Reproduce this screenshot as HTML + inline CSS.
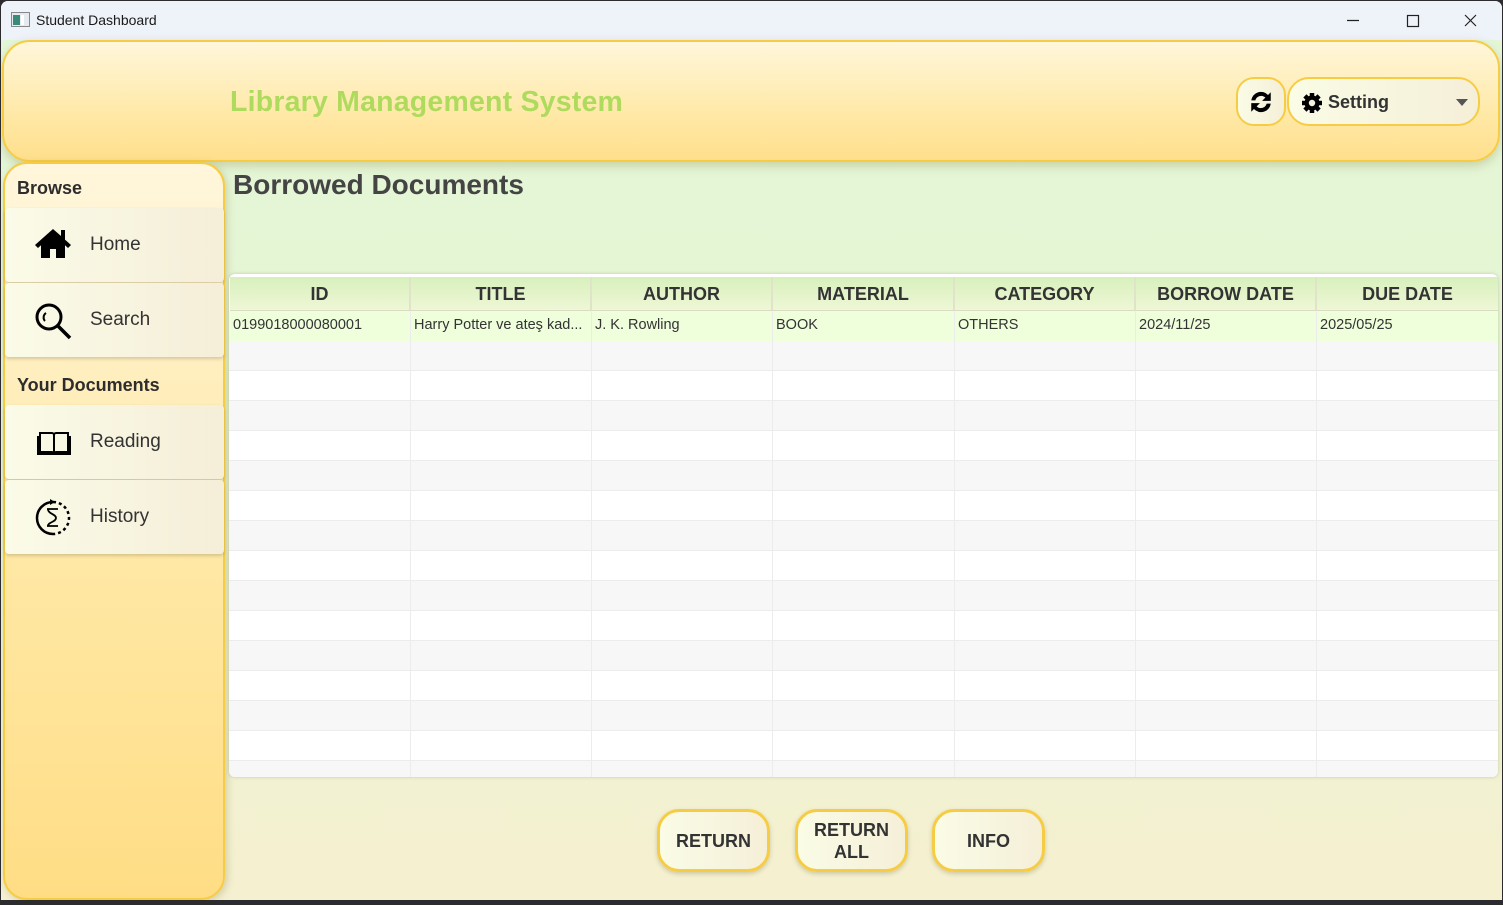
<!DOCTYPE html>
<html><head><meta charset="utf-8">
<style>
*{margin:0;padding:0;box-sizing:border-box}
body{width:1503px;height:905px;overflow:hidden;background:#2b2b30;font-family:"Liberation Sans",sans-serif;position:relative}
.win{position:absolute;left:1px;top:1px;width:1501px;height:899px;background:linear-gradient(#e3f7d8,#e6f5d4 40%,#f5f0d0);border-radius:7px 7px 0 0;overflow:hidden}
.tb{position:absolute;left:0;top:0;width:1501px;height:39px;background:#eef2f9;font-size:14px;color:#1a1a1a}
.tb .t{position:absolute;left:35px;top:11px}
.hdr{position:absolute;left:1px;top:39px;width:1498px;height:122px;border:2px solid #f7cc45;border-radius:28px;background:linear-gradient(#fff7db,#ffe9a8 60%,#ffdf8c);box-shadow:0 4px 10px rgba(150,140,80,.35)}
.title{position:absolute;left:226px;top:44px;font-size:28.5px;font-weight:bold;color:#aedb5d;letter-spacing:.2px}
.side{position:absolute;left:2px;top:161px;width:222px;height:738px;border:2px solid #f7cc45;border-radius:24px;background:linear-gradient(#fff6dc,#ffe9a8 50%,#ffdd85);box-shadow:2px 2px 8px rgba(150,140,80,.35)}
.sh{position:absolute;left:12px;font-size:18px;font-weight:bold;color:#2d2d2d}
.item{position:absolute;left:0;width:219px;height:74px;background:linear-gradient(90deg,#fafbe8,#f5eed8);border-radius:4px;box-shadow:0 2px 3px rgba(120,110,70,.3);font-size:19px;color:#333}
.item span{position:absolute;left:85px;top:26px}
.item svg{position:absolute;left:29px;top:19px}
h2{position:absolute;left:232px;top:168px;font-size:28px;color:#444;font-weight:bold}
.tbl{position:absolute;left:228px;top:273px;width:1269px;height:503px;background:#fff;border-radius:6px;box-shadow:0 0 3px rgba(150,160,120,.5);overflow:hidden}
.hd{position:absolute;top:3px;height:34px;background:linear-gradient(#d8f0bc,#eef7d6);border-right:2px solid #dfe3c8;border-bottom:1px solid #d8dcc0;font-size:18px;font-weight:bold;color:#333;text-align:center;line-height:34px}
.row{position:absolute;left:0;width:1269px;height:30px;border-bottom:1px solid #ececec}
.cell{position:absolute;font-size:14.5px;color:#333;top:43px}
.vl{position:absolute;top:37px;height:466px;width:1px;background:#ececec}
.btn{position:absolute;top:808px;width:113px;height:63px;border:3px solid #f7cc45;border-radius:22px;background:linear-gradient(90deg,#fafce6,#f5efd8);box-shadow:0 2px 4px rgba(120,110,70,.3);font-size:18px;font-weight:bold;color:#333;text-align:center;display:flex;align-items:center;justify-content:center;line-height:22px}
</style></head><body>
<div class="win">
<div class="tb">
<svg style="position:absolute;left:10px;top:11px" width="19" height="15"><rect x=".5" y=".5" width="18" height="14" fill="#e5e9f0" stroke="#888"/><rect x="2" y="3" width="7" height="10" fill="#3a8a7a"/><rect x="10" y="3" width="3" height="10" fill="#fff"/></svg>
<div class="t">Student Dashboard</div>
<svg style="position:absolute;left:1346px;top:12px" width="140" height="16"><path d="M0 7.5h12" stroke="#222" stroke-width="1.2"/><rect x="60.5" y="2.5" width="11" height="11" fill="none" stroke="#222" stroke-width="1.2"/><path d="M118 2l11 11M129 2l-11 11" stroke="#222" stroke-width="1.2"/></svg>
</div>
<div class="hdr">
<div class="title">Library Management System</div>
<div style="position:absolute;left:1232px;top:35px;width:50px;height:49px;border:2px solid #f7cc45;border-radius:18px;background:linear-gradient(90deg,#fafce6,#f5efd8)">
<svg style="position:absolute;left:10px;top:10px" width="26" height="26" viewBox="0 0 24 24"><path d="M3 10.5a9 9 0 0 1 15.5-5L21 3v8h-8l3-3A5.5 5.5 0 0 0 6.8 10.5z M21 13.5a9 9 0 0 1-15.5 5L3 21v-8h8l-3 3a5.5 5.5 0 0 0 9.2-2.5z" fill="#000"/></svg>
</div>
<div style="position:absolute;left:1283px;top:35px;width:193px;height:49px;border:2px solid #f7cc45;border-radius:22px;background:linear-gradient(90deg,#fafce6,#f5efd8)">
<svg style="position:absolute;left:12px;top:13px" width="22" height="22" viewBox="0 0 22 22"><g fill="#000"><circle cx="11" cy="11" r="7.5"/><g stroke="#000" stroke-width="4.5"><path d="M11 1v20M1 11h20M3.9 3.9l14.2 14.2M18.1 3.9L3.9 18.1"/></g></g><circle cx="11" cy="11" r="3.2" fill="#f7f4dc"/></svg>
<span style="position:absolute;left:39px;top:13px;font-size:18px;font-weight:bold;color:#333">Setting</span>
<svg style="position:absolute;left:167px;top:20px" width="12" height="7"><path d="M0 0h12L6 7z" fill="#555"/></svg>
</div>
</div>
<div class="side">
<div class="sh" style="top:14px">Browse</div>
<div class="item" style="top:44px"><svg width="38" height="32" viewBox="0 0 38 32"><path d="M19 2L1 18l3 3 3-2.7V31h9v-9h6v9h9V18.3L34 21l3-3-6-5.4V3h-4v6L19 2z" fill="#000"/></svg><span>Home</span></div>
<div class="item" style="top:119px"><svg width="40" height="40" viewBox="0 0 40 40"><circle cx="15" cy="15" r="12" fill="none" stroke="#000" stroke-width="3"/><path d="M24 24l12 12" stroke="#000" stroke-width="3.5"/><path d="M11 19c-2-2-2-6 1-8" fill="none" stroke="#000" stroke-width="2"/></svg><span>Search</span></div>
<div class="sh" style="top:211px">Your Documents</div>
<div class="item" style="top:241px"><svg width="34" height="28" viewBox="0 0 34 28" style="top:24px;left:32px"><path d="M3 4h12c1 0 2 1 2 2 0-1 1-2 2-2h12v19H19c-1 0-2 1-2 1 0 0-1-1-2-1H3zM17 6v18M1 7v18h32V7" fill="none" stroke="#000" stroke-width="2"/></svg><span>Reading</span></div>
<div class="item" style="top:316px"><svg width="38" height="38" viewBox="0 0 38 38"><path d="M19 3A16 16 0 1 0 19 35" fill="none" stroke="#000" stroke-width="2.5"/><path d="M19 3a16 16 0 0 1 0 32" fill="none" stroke="#000" stroke-width="2.5" stroke-dasharray="3 3"/><path d="M16 0l5 3-5 3z" fill="#000"/><path d="M13 10h11M13 27h11M14 10c0 5 8 5 8 9s-8 4-8 8" fill="none" stroke="#000" stroke-width="1.8"/></svg><span>History</span></div>
</div>
<h2>Borrowed Documents</h2>
<div class="tbl">
<div class="row" style="top:37px;background:#efffdc;border-bottom:none"></div>
<div class="row" style="top:67px;background:#f7f7f7"></div>
<div class="row" style="top:97px"></div>
<div class="row" style="top:127px;background:#f7f7f7"></div>
<div class="row" style="top:157px"></div>
<div class="row" style="top:187px;background:#f7f7f7"></div>
<div class="row" style="top:217px"></div>
<div class="row" style="top:247px;background:#f7f7f7"></div>
<div class="row" style="top:277px"></div>
<div class="row" style="top:307px;background:#f7f7f7"></div>
<div class="row" style="top:337px"></div>
<div class="row" style="top:367px;background:#f7f7f7"></div>
<div class="row" style="top:397px"></div>
<div class="row" style="top:427px;background:#f7f7f7"></div>
<div class="row" style="top:457px"></div>
<div class="row" style="top:487px;background:#f7f7f7"></div>
<div class="vl" style="left:181px"></div><div class="vl" style="left:362px"></div><div class="vl" style="left:543px"></div><div class="vl" style="left:725px"></div><div class="vl" style="left:906px"></div><div class="vl" style="left:1087px"></div>
<div class="hd" style="left:1px;width:181px">ID</div>
<div class="hd" style="left:182px;width:181px">TITLE</div>
<div class="hd" style="left:363px;width:181px">AUTHOR</div>
<div class="hd" style="left:544px;width:182px">MATERIAL</div>
<div class="hd" style="left:726px;width:181px">CATEGORY</div>
<div class="hd" style="left:907px;width:181px">BORROW DATE</div>
<div class="hd" style="left:1088px;width:181px;border-right:none">DUE DATE</div>
<div class="cell" style="left:4px">0199018000080001</div>
<div class="cell" style="left:185px">Harry Potter ve ateş kad...</div>
<div class="cell" style="left:366px">J. K. Rowling</div>
<div class="cell" style="left:547px">BOOK</div>
<div class="cell" style="left:729px">OTHERS</div>
<div class="cell" style="left:910px">2024/11/25</div>
<div class="cell" style="left:1091px">2025/05/25</div>
</div>
<div class="btn" style="left:656px">RETURN</div>
<div class="btn" style="left:794px">RETURN<br>ALL</div>
<div class="btn" style="left:931px">INFO</div>
</div>
</body></html>
